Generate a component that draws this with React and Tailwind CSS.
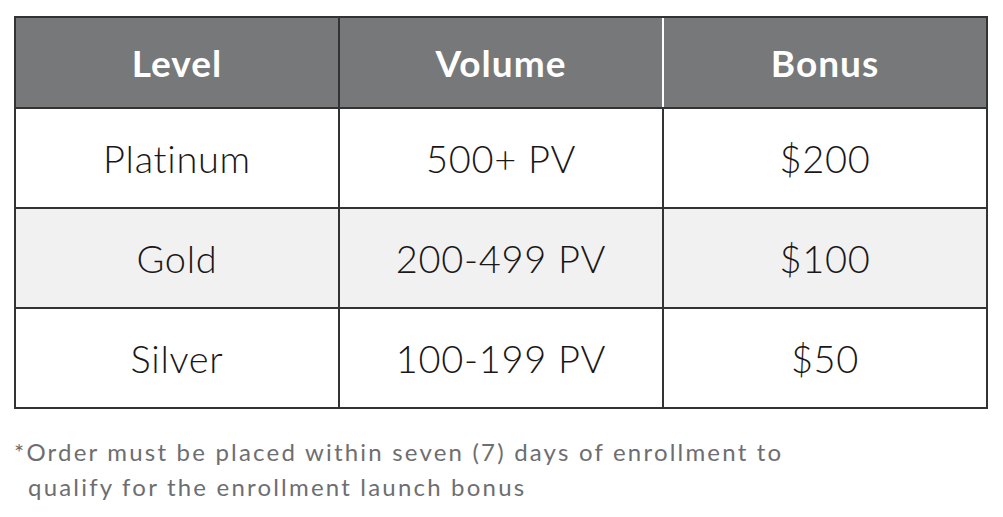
import React from "react";

const rows = [
  { level: "Platinum", volume: "500+ PV", bonus: "$200", bg: "bg-white" },
  { level: "Gold", volume: "200-499 PV", bonus: "$100", bg: "bg-[#f1f1f1]" },
  { level: "Silver", volume: "100-199 PV", bonus: "$50", bg: "bg-white" },
];

export default function App() {
  return (
    <div className="w-[1003px] h-[517px] bg-white pt-[16px] pl-[14px]" style={{ fontFamily: "Lato, 'Open Sans', sans-serif" }}>
      <div className="w-[974px] border-2 border-[#333333]">
        <div className="grid grid-cols-[322px_2px_322px_2px_322px] h-[89px] bg-[#77787a] text-white font-bold text-[37px] tracking-[1px]">
          <div className="flex items-center justify-center">Level</div>
          <div className="bg-[#333333]" />
          <div className="flex items-center justify-center">Volume</div>
          <div className="bg-white" />
          <div className="flex items-center justify-center">Bonus</div>
        </div>
        {rows.map((r) => (
          <div key={r.level} className={`grid grid-cols-[322px_2px_322px_2px_322px] h-[100px] border-t-2 border-[#333333] ${r.bg} text-[#1a1718] text-[38px] font-light tracking-[0.7px]`}>
            <div className="flex items-center justify-center">{r.level}</div>
            <div className="bg-[#333333]" />
            <div className="flex items-center justify-center">{r.volume}</div>
            <div className="bg-[#333333]" />
            <div className="flex items-center justify-center">{r.bonus}</div>
          </div>
        ))}
      </div>
      <div className="mt-[25px] text-[24px] leading-[35px] text-[#6d6e71] font-normal tracking-[2.2px]">
        <div>*Order must be placed within seven (7) days of enrollment to</div>
        <div className="pl-[14px]">qualify for the enrollment launch bonus</div>
      </div>
    </div>
  );
}
